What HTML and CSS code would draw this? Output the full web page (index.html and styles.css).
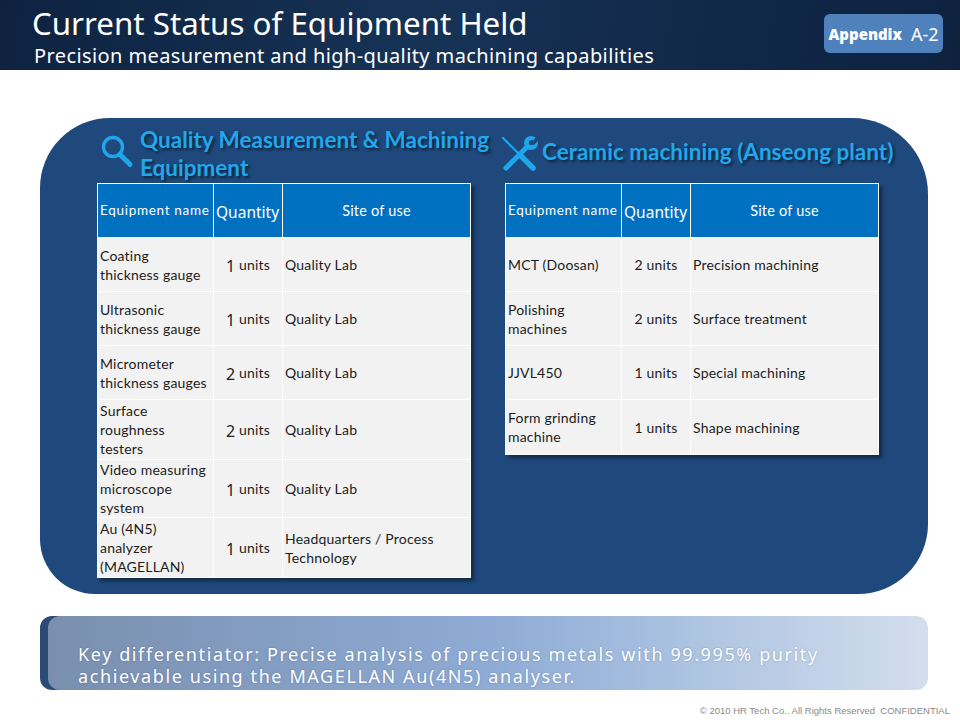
FILE: index.html
```html
<!DOCTYPE html>
<html lang="en">
<head>
<meta charset="utf-8">
<title>Current Status of Equipment Held</title>
<link rel="stylesheet" href="styles.css">
</head>
<body>
<header class="top">
  <div class="titles">
    <h1 class="title">Current Status of Equipment Held</h1>
    <p class="subtitle">Precision measurement and high-quality machining capabilities</p>
  </div>
  <div class="badge"><b>Appendix</b><span class="badge-code">A-2</span></div>
</header>

<main class="panel">
  <section class="col">
    <h2 class="sec-head sec-left">
      <svg class="ico-search" width="34" height="34" viewBox="0 0 34 34" aria-hidden="true">
        <circle cx="13" cy="12" r="9.5" fill="none" stroke="#1fa6ea" stroke-width="3.4"/>
        <line x1="20" y1="19.5" x2="30" y2="29.5" stroke="#1fa6ea" stroke-width="5" stroke-linecap="round"/>
      </svg>
      <span class="sec-title">Quality Measurement &amp; Machining<br>Equipment</span>
    </h2>
    <table class="eq">
      <colgroup><col class="c1"><col class="c2"><col class="c3"></colgroup>
      <thead>
        <tr class="h54"><th class="th-name">Equipment name</th><th class="th-qty">Quantity</th><th class="th-site">Site of use</th></tr>
      </thead>
      <tbody>
        <tr class="h54"><td>Coating thickness gauge</td><td class="qty"><span class="n">1</span> units</td><td>Quality Lab</td></tr>
        <tr class="h54"><td>Ultrasonic thickness gauge</td><td class="qty"><span class="n">1</span> units</td><td>Quality Lab</td></tr>
        <tr class="h54"><td>Micrometer thickness gauges</td><td class="qty"><span class="n">2</span> units</td><td>Quality Lab</td></tr>
        <tr class="h60"><td>Surface<br>roughness<br>testers</td><td class="qty"><span class="n">2</span> units</td><td>Quality Lab</td></tr>
        <tr class="h58"><td>Video measuring microscope system</td><td class="qty"><span class="n">1</span> units</td><td>Quality Lab</td></tr>
        <tr class="h60"><td>Au (4N5)<br>analyzer<br>(MAGELLAN)</td><td class="qty"><span class="n">1</span> units</td><td>Headquarters / Process Technology</td></tr>
      </tbody>
    </table>
  </section>

  <section class="col">
    <h2 class="sec-head sec-right">
      <svg class="ico-tools" width="40" height="38" viewBox="0 0 40 38" aria-hidden="true">
        <line x1="3" y1="3" x2="21" y2="21" stroke="#1fa6ea" stroke-width="2.2" stroke-linecap="round"/>
        <line x1="22" y1="22" x2="33" y2="33" stroke="#1fa6ea" stroke-width="5.5" stroke-linecap="round"/>
        <line x1="29" y1="10" x2="6" y2="33" stroke="#1fa6ea" stroke-width="5" stroke-linecap="round"/>
        <circle cx="31" cy="8" r="7" fill="#1fa6ea"/>
        <path d="M31 8 L37 1 L40 4 L34 10 Z" fill="#1f497d"/>
        <circle cx="31.5" cy="7.5" r="2.6" fill="#1f497d"/>
      </svg>
      <span class="sec-title">Ceramic machining (Anseong plant)</span>
    </h2>
    <table class="eq">
      <colgroup><col class="c1"><col class="c2"><col class="c3"></colgroup>
      <thead>
        <tr class="h54"><th class="th-name">Equipment name</th><th class="th-qty">Quantity</th><th class="th-site">Site of use</th></tr>
      </thead>
      <tbody>
        <tr class="h54"><td>MCT (Doosan)</td><td class="qty">2 units</td><td>Precision machining</td></tr>
        <tr class="h54"><td>Polishing machines</td><td class="qty">2 units</td><td>Surface treatment</td></tr>
        <tr class="h54"><td>JJVL450</td><td class="qty">1 units</td><td>Special machining</td></tr>
        <tr class="h55"><td>Form grinding machine</td><td class="qty">1 units</td><td>Shape machining</td></tr>
      </tbody>
    </table>
  </section>
</main>

<div class="note">
  <p class="note-inner">Key differentiator: Precise analysis of precious metals with 99.995% purity<br>achievable using the MAGELLAN Au(4N5) analyser.</p>
</div>

<footer class="foot">© 2010 HR Tech Co.. All Rights Reserved &nbsp;CONFIDENTIAL</footer>
</body>
</html>
```

FILE: styles.css
```css
html, body {
  margin: 0;
  padding: 0;
}
body {
  width: 960px;
  height: 720px;
  overflow: hidden;
  background: #ffffff;
  font-family: "Noto Sans", "Noto Sans CJK KR", sans-serif;
}

/* header */
.top {
  height: 70px;
  box-sizing: border-box;
  padding: 0 17px 0 32px;
  display: flex;
  justify-content: space-between;
  align-items: flex-start;
  background: linear-gradient(100deg, #0e2240 0%, #163356 45%, #12294a 70%, #0e2240 100%);
  color: #ffffff;
}
.title {
  margin: 0;
  padding-top: 5px;
  font-size: 31.3px;
  line-height: 36px;
  font-weight: normal;
}
.subtitle {
  margin: 4px 0 0 2px;
  font-size: 20px;
  line-height: 22px;
  letter-spacing: 0.4px;
}
.badge {
  margin-top: 14px;
  width: 119px;
  height: 39px;
  border-radius: 6px;
  background: #4f81bd;
  display: flex;
  align-items: center;
  justify-content: center;
  gap: 9px;
  font-size: 15px;
  font-weight: bold;
}
.badge-code {
  font-size: 18px;
  font-weight: normal;
}

/* main panel */
.panel {
  margin: 48px 32px 0 40px;
  height: 476px;
  box-sizing: border-box;
  padding: 9px 0 0 57px;
  background: #1f497d;
  border-radius: 70px 76px 70px 55px;
  display: grid;
  grid-template-columns: 373px 373px;
  column-gap: 35px;
  align-items: start;
}
.sec-head {
  margin: 0;
  height: 56px;
  display: flex;
  font-family: "Lato", "Noto Sans", sans-serif;
  font-size: 22.5px;
  font-weight: bold;
  line-height: 28px;
  color: #21a7ec;
  white-space: nowrap;
  text-shadow: 2px 2px 3px rgba(0, 0, 0, 0.55);
}
.sec-left {
  align-items: flex-start;
}
.sec-left .ico-search {
  margin: 8px 6px 0 3px;
  flex: none;
}
.sec-left .sec-title {
  margin-top: -1px;
}
.sec-right {
  align-items: center;
  padding-bottom: 6px;
  box-sizing: border-box;
}
.sec-right .ico-tools {
  margin: 4px 2px 0 -5px;
  flex: none;
}

/* tables */
.eq {
  width: 373px;
  table-layout: fixed;
  border-collapse: collapse;
  font-family: "Lato", "Noto Sans", sans-serif;
  font-size: 14px;
  letter-spacing: 0.2px;
  line-height: 19px;
  color: #1c1c1c;
  box-shadow: 3px 3px 4px rgba(0, 0, 0, 0.45);
}
.c1 { width: 116px; }
.c2 { width: 69px; }
.c3 { width: 188px; }
.eq th,
.eq td {
  border: 1px solid #ffffff;
  padding: 0 2px;
  vertical-align: middle;
}
.eq th {
  background: #0070c0;
  color: #ffffff;
  font-weight: normal;
  text-align: left;
}
.eq .th-name {
  font-size: 13.5px;
  letter-spacing: 0.7px;
  white-space: nowrap;
}
.eq .th-qty {
  font-family: "Noto Sans", sans-serif;
  font-size: 15.5px;
  letter-spacing: 0;
  padding: 4px 0 0 2px;
}
.eq .th-site {
  text-align: center;
  font-size: 14.5px;
}
.eq td {
  background: #f2f2f2;
}
.eq td.qty {
  text-align: center;
}
.n {
  font-family: "Noto Sans", sans-serif;
  font-size: 16px;
  position: relative;
  top: 2px;
}
.h54 { height: 54px; }
.h55 { height: 55px; }
.h58 { height: 58px; }
.h60 { height: 60px; }

/* note */
.note {
  margin: 22px 32px 0 40px;
  height: 74px;
  border-radius: 12px;
  background: linear-gradient(to right, #2b4b77 0, #2b4b77 50%, transparent 50%);
}
.note-inner {
  margin: 0 0 0 8px;
  height: 74px;
  box-sizing: border-box;
  padding: 27px 0 0 30px;
  border-radius: 12px;
  background: linear-gradient(to right, #7a8fae 0%, #86a0c6 30%, #8eabd5 50%, #a8c0e0 70%, #d3deed 100%);
  color: #ffffff;
  font-size: 18px;
  line-height: 22px;
  letter-spacing: 1.6px;
  text-shadow: 0 0 2px rgba(40, 60, 100, 0.35);
}

/* footer */
.foot {
  margin-top: 15px;
  padding-right: 10px;
  text-align: right;
  font-family: "Liberation Sans", Arial, sans-serif;
  font-size: 9.5px;
  line-height: 12px;
  color: #8a8a8a;
}
```
